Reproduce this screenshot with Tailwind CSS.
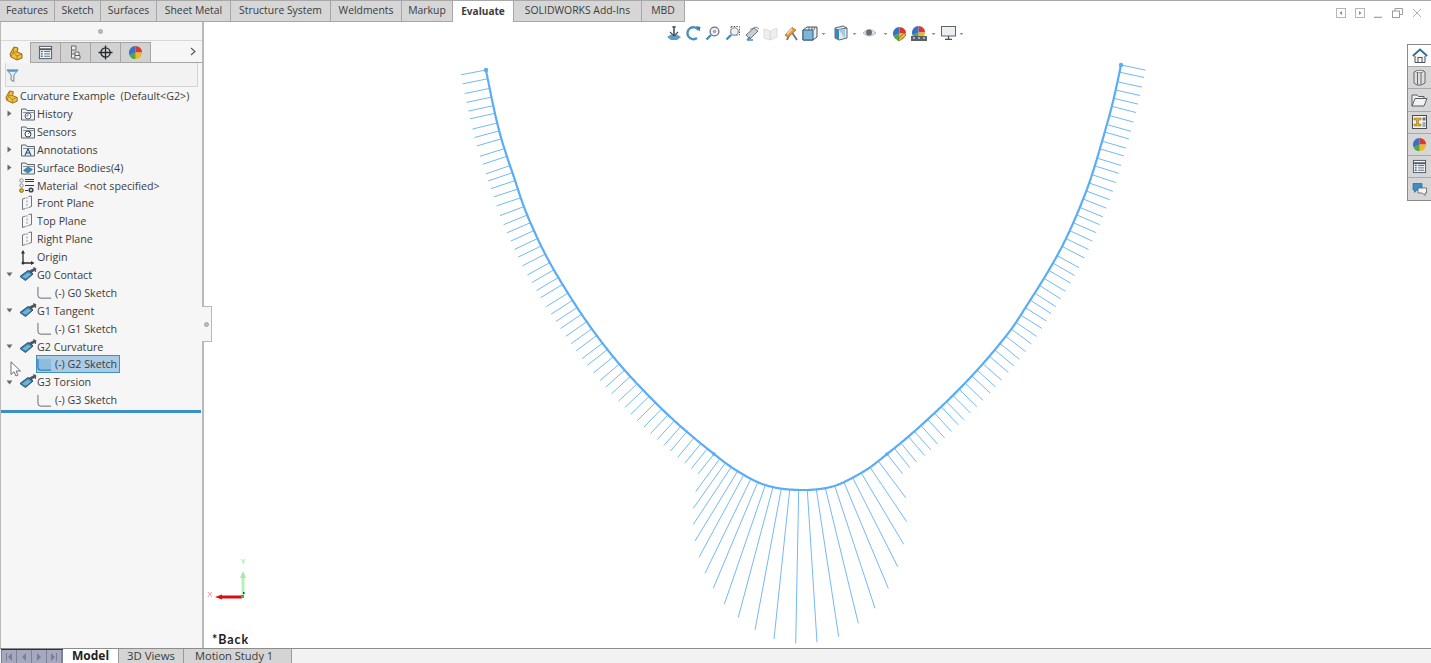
<!DOCTYPE html>
<html lang="en">
<head>
<meta charset="utf-8">
<title>Curvature Example</title>
<script src="https://cdn.jsdelivr.net/npm/@tailwindcss/browser@4"></script>
</head>
<body class="bg-white">
<svg class="absolute w-0 h-0" aria-hidden="true">
  <defs>
    <symbol id="part" viewBox="0 0 16 16">
      <path d="M2 9 L6 2 L10 3 L9 7 L14 9 L14 13 L9 15 L3 12 Z" fill="#f4bd3c" stroke="#8d6a12" stroke-width="1"/>
      <path d="M6 2 L5 7 L9 7 M5 7 L3 12 M9 15 L9 11 L14 9 M9 11 L5 8" fill="none" stroke="#a07c1c" stroke-width=".8"/>
    </symbol>
    <symbol id="folder" viewBox="0 0 16 16">
      <path d="M1.5 14 V3 H6 L7 4.5 H14.5 V14 Z" fill="#eef1f4" stroke="#5c6670"/>
      <path d="M3 6.5 H14.5" stroke="#8a949e"/>
    </symbol>
    <symbol id="plane" viewBox="0 0 16 16">
      <path d="M3.5 4 L6.5 3 M9.5 1.5 L12.5 1 V11.5 L9.5 12.5 M6.5 13.5 L3.5 14.5 V4" fill="none" stroke="#6e7780" stroke-width="1"/>
      <path d="M8 2 V14" stroke="#8e979f" stroke-dasharray="2 1.4"/>
    </symbol>
    <symbol id="surf" viewBox="0 0 18 16">
      <path d="M1 9.5 L9 3.5 L14 7 L6.5 13.5 Z" fill="#3f83ad" stroke="#20506f"/>
      <path d="M3 10 L9 5.5 L12 7.5 L7 11.5 Z" fill="#73b3d8"/>
      <path d="M10 4 L15 1.5 L14.5 0.5 L17 1.5 L16.5 5 L15.5 3.5 L12 6" fill="#4b5660" stroke="#2c343b" stroke-width=".5"/>
    </symbol>
    <symbol id="sketch" viewBox="0 0 16 16">
      <path d="M1 2 V11 Q1 14 4 14 H15" fill="none" stroke="#5b646c" stroke-width="1"/>
    </symbol>
    <symbol id="ball" viewBox="0 0 16 16">
      <path d="M8 8 L8 1 A7 7 0 0 1 15 8 Z" fill="#d83a30"/>
      <path d="M8 8 L15 8 A7 7 0 0 1 8 15 Z" fill="#eab92a"/>
      <path d="M8 8 L8 15 A7 7 0 0 1 1.6 10.8 Z" fill="#54a53f"/>
      <path d="M8 8 L1.6 10.8 A7 7 0 0 1 8 1 Z" fill="#3a71c4"/>
    </symbol>
    <symbol id="list" viewBox="0 0 16 16">
      <rect x="1.5" y="1.5" width="13" height="13" fill="#f4f7fa" stroke="#4e5963"/>
      <path d="M1.5 4.5 H14.5" stroke="#4e5963" stroke-width="2"/>
      <path d="M3 7 H5 M3 9.5 H5 M3 12 H5" stroke="#2868a8" stroke-width="1.4"/>
      <path d="M6.5 7 H13 M6.5 9.5 H13 M6.5 12 H13" stroke="#59636c" stroke-width="1"/>
    </symbol>
    <symbol id="dd" viewBox="0 0 5 5"><path d="M0.5 2 H4.5 L2.5 4 Z" fill="#8b8b8b"/></symbol>
  </defs>
</svg>

<div class="flex flex-col w-[1431px] h-[663px] overflow-hidden font-['Open_Sans',sans-serif] text-[10.7px] text-[#3c3c3c]">

  <!-- top tab bar -->
  <header class="flex items-stretch h-[22px] shrink-0 border-t border-[#a8a8a8] text-[10.4px]">
    <nav class="flex items-stretch">
      <a class="w-[55px] bg-[#d6d6d6] border-r border-b border-[#a6a6a6] flex items-center justify-center">Features</a>
      <a class="w-[46px] bg-[#d6d6d6] border-r border-b border-[#a6a6a6] flex items-center justify-center">Sketch</a>
      <a class="w-[56px] bg-[#d6d6d6] border-r border-b border-[#a6a6a6] flex items-center justify-center">Surfaces</a>
      <a class="w-[74px] bg-[#d6d6d6] border-r border-b border-[#a6a6a6] flex items-center justify-center">Sheet Metal</a>
      <a class="w-[100px] bg-[#d6d6d6] border-r border-b border-[#a6a6a6] flex items-center justify-center">Structure System</a>
      <a class="w-[71px] bg-[#d6d6d6] border-r border-b border-[#a6a6a6] flex items-center justify-center">Weldments</a>
      <a class="w-[51px] bg-[#d6d6d6] border-r border-[#a6a6a6] border-b flex items-center justify-center">Markup</a>
      <a class="w-[61px] bg-white border-r border-[#a6a6a6] flex items-center justify-center font-bold text-[10.1px]">Evaluate</a>
      <a class="w-[128px] bg-[#d6d6d6] border-r border-b border-[#a6a6a6] flex items-center justify-center">SOLIDWORKS Add-Ins</a>
      <a class="w-[43px] bg-[#d6d6d6] border-r border-b border-[#a6a6a6] flex items-center justify-center">MBD</a>
    </nav>
    <div class="flex-1 relative">
      <div class="absolute right-[9px] top-[7px] flex items-center gap-[9px]">
        <svg class="w-[10px] h-[10px]" viewBox="0 0 10 10"><rect x=".5" y=".5" width="9" height="9" fill="none" stroke="#b5b5b5"/><path d="M6 3 L3.5 5 L6 7 Z" fill="#8a8a8a"/></svg>
        <svg class="w-[10px] h-[10px]" viewBox="0 0 10 10"><rect x=".5" y=".5" width="9" height="9" fill="none" stroke="#b5b5b5"/><path d="M4 3 L6.5 5 L4 7 Z" fill="#8a8a8a"/></svg>
        <svg class="w-[9px] h-[10px]" viewBox="0 0 9 10"><path d="M0 9.5 H8" stroke="#a8a8a8" stroke-width="1.6"/></svg>
        <svg class="w-[11px] h-[10px]" viewBox="0 0 11 10"><rect x=".5" y="3" width="7" height="6.5" fill="none" stroke="#9d9d9d"/><path d="M3 3 V.5 H10.5 V6.5 H7.5" fill="none" stroke="#9d9d9d"/></svg>
        <svg class="w-[10px] h-[10px]" viewBox="0 0 10 10"><path d="M1 1 L9 9 M9 1 L1 9" stroke="#b0b0b0"/></svg>
      </div>
    </div>
  </header>

  <!-- main -->
  <main class="flex flex-1 min-h-0">
    <!-- feature manager -->
    <aside class="relative w-[204px] shrink-0 bg-[#f6f6f6] border-l border-r-2 border-[#b9b9b9] flex flex-col">
      <div class="h-[19px] border-b border-[#d8d8d8] flex items-center justify-center shrink-0 pr-[2px]">
        <span class="w-[5px] h-[5px] rounded-full bg-[#bdbdbd] border border-[#a5a5a5]"></span>
      </div>
      <div class="h-[22px] flex items-end shrink-0 relative pb-0 border-b border-[#a5a5a5]">
        <span class="w-[30px] h-[21px] bg-[#f6f6f6] border-r border-[#a5a5a5] -mb-px flex items-center justify-center"><svg class="w-[16px] h-[16px]"><use href="#part"/></svg></span>
        <span class="w-[30px] h-[20px] bg-[#d2d2d2] border-r border-t border-[#a5a5a5] flex items-center justify-center"><svg class="w-[15px] h-[15px]"><use href="#list"/></svg></span>
        <span class="w-[30px] h-[20px] bg-[#d2d2d2] border-r border-t border-[#a5a5a5] flex items-center justify-center">
          <svg class="w-[15px] h-[15px]" viewBox="0 0 15 15"><path d="M3.5 1 H8 V5 H3.5 Z M3.5 5 V13 H7 M3.5 9 H7 M7 7 H11 V10.5 H7 Z M7 10.5 H12 V14 H7 Z" fill="#ededed" stroke="#5a6067" stroke-width=".9"/></svg>
        </span>
        <span class="w-[30px] h-[20px] bg-[#d2d2d2] border-r border-t border-[#a5a5a5] flex items-center justify-center">
          <svg class="w-[15px] h-[15px]" viewBox="0 0 15 15"><circle cx="7.5" cy="7.5" r="4.6" fill="none" stroke="#262b30" stroke-width="1.3"/><path d="M7.5 .5 V14.5 M.5 7.5 H14.5" stroke="#262b30" stroke-width="1.3"/></svg>
        </span>
        <span class="w-[30px] h-[20px] bg-[#d2d2d2] border-r border-t border-[#a5a5a5] flex items-center justify-center"><svg class="w-[15px] h-[15px]"><use href="#ball"/></svg></span>
        <svg class="absolute left-[189px] top-[6px] w-[6px] h-[9px]" viewBox="0 0 6 9"><path d="M1 1 L5 4.5 L1 8" fill="none" stroke="#555" stroke-width="1.1"/></svg>
      </div>
      <div class="mx-[4px] h-[24.15px] bg-[#f2f2f2] border-x border-b border-[#d4d4d4] shrink-0 pt-[5px]">
        <svg class="w-[13px] h-[15px]" viewBox="0 0 14 15"><path d="M1 1.5 H13 L8.5 7 V14 L5.5 12.5 V7 Z" fill="#e8eff4" stroke="#5d7f97"/><path d="M1 1.5 H13 L11.5 3.5 H2.5 Z" fill="#4f9ac9"/></svg>
      </div>

      <!-- tree -->
      <ul class="flex flex-col shrink-0 [&>li]:h-[17.9px] [&>li]:flex [&>li]:items-center">
        <li class="pl-[3px]"><svg class="w-[15px] h-[15px] mr-px"><use href="#part"/></svg>Curvature Example&nbsp; (Default&lt;G2&gt;)</li>
        <li><span class="w-[16px] flex justify-center"><svg class="w-[5px] h-[7px]" viewBox="0 0 5 7"><path d="M0.5 0.5 L4.5 3.5 L0.5 6.5 Z" fill="#6a6a6a"/></svg></span><span class="relative w-[20px] h-[16px]"><svg class="w-[16px] h-[16px] ml-[3px]"><use href="#folder"/></svg><svg class="absolute left-[7px] top-[6px] w-[8px] h-[8px]" viewBox="0 0 8 8"><circle cx="4" cy="4" r="3" fill="#fff" stroke="#45647c"/><path d="M4 2 V4 H2" stroke="#c44" fill="none" stroke-width=".8"/></svg></span>History</li>
        <li class="pl-[16px]"><span class="relative w-[20px] h-[16px]"><svg class="w-[16px] h-[16px] ml-[3px]"><use href="#folder"/></svg><svg class="absolute left-[7px] top-[6px] w-[8px] h-[8px]" viewBox="0 0 8 8"><circle cx="4" cy="4" r="3" fill="#fff" stroke="#3a3f44"/><path d="M4 4 L6 2" stroke="#d33"/></svg></span>Sensors</li>
        <li><span class="w-[16px] flex justify-center"><svg class="w-[5px] h-[7px]" viewBox="0 0 5 7"><path d="M0.5 0.5 L4.5 3.5 L0.5 6.5 Z" fill="#6a6a6a"/></svg></span><span class="relative w-[20px] h-[16px]"><svg class="w-[16px] h-[16px] ml-[3px]"><use href="#folder"/></svg><svg class="absolute left-[7px] top-[6px] w-[8px] h-[8px]" viewBox="0 0 8 8"><path d="M1 7.5 L4 .8 L7 7.5 M2.3 5 H5.7" fill="none" stroke="#26507c" stroke-width="1.1"/></svg></span>Annotations</li>
        <li><span class="w-[16px] flex justify-center"><svg class="w-[5px] h-[7px]" viewBox="0 0 5 7"><path d="M0.5 0.5 L4.5 3.5 L0.5 6.5 Z" fill="#6a6a6a"/></svg></span><span class="relative w-[20px] h-[16px]"><svg class="w-[16px] h-[16px] ml-[3px]"><use href="#folder"/></svg><svg class="absolute left-[6px] top-[6px] w-[10px] h-[8px]" viewBox="0 0 10 8"><path d="M.5 4.5 L5 1 L9.5 3.5 L5 7 Z" fill="#4089b3" stroke="#28597a" stroke-width=".6"/></svg></span>Surface Bodies(4)</li>
        <li class="pl-[16px]"><svg class="w-[16px] h-[16px] ml-[2px] mr-[2px]" viewBox="0 0 16 16"><circle cx="2.5" cy="2.5" r="1.7" fill="#fff" stroke="#80888f"/><path d="M6 1.5 H15 M6 3.5 H15 M6 7.5 H15" stroke="#333b43" stroke-width="1.1"/><circle cx="2.5" cy="7.5" r="1.7" fill="#fff" stroke="#80888f"/><circle cx="2.5" cy="12.5" r="1.9" fill="#e7b62d" stroke="#8a6b12"/><path d="M6 12.5 H9" stroke="#333b43"/><circle cx="12" cy="12" r="2.6" fill="#3d454c"/><circle cx="12" cy="12" r=".9" fill="#fff"/></svg>Material&nbsp; &lt;not specified&gt;</li>
        <li class="pl-[16px]"><svg class="w-[16px] h-[16px] ml-[2px] mr-[2px]"><use href="#plane"/></svg>Front Plane</li>
        <li class="pl-[16px]"><svg class="w-[16px] h-[16px] ml-[2px] mr-[2px]"><use href="#plane"/></svg>Top Plane</li>
        <li class="pl-[16px]"><svg class="w-[16px] h-[16px] ml-[2px] mr-[2px]"><use href="#plane"/></svg>Right Plane</li>
        <li class="pl-[16px]"><svg class="w-[16px] h-[16px] ml-[2px] mr-[2px]" viewBox="0 0 16 16"><path d="M4 14 V3 M4 14 H14" stroke="#2b3035" stroke-width="1.3" fill="none"/><path d="M4 1 L6 4.5 H2 Z M15.5 14 L12 12 V16 Z" fill="#2b3035"/><circle cx="4" cy="14" r="1.5" fill="#2b3035"/></svg>Origin</li>
        <li><span class="w-[16px] flex justify-center"><svg class="w-[7px] h-[5px]" viewBox="0 0 7 5"><path d="M0.5 0.5 H6.5 L3.5 4.5 Z" fill="#6a6a6a"/></svg></span><svg class="w-[18px] h-[16px] ml-[2px]"><use href="#surf"/></svg>G0 Contact</li>
        <li class="pl-[36px]"><svg class="w-[15px] h-[15px] mr-[3px]"><use href="#sketch"/></svg>(-) G0 Sketch</li>
        <li><span class="w-[16px] flex justify-center"><svg class="w-[7px] h-[5px]" viewBox="0 0 7 5"><path d="M0.5 0.5 H6.5 L3.5 4.5 Z" fill="#6a6a6a"/></svg></span><svg class="w-[18px] h-[16px] ml-[2px]"><use href="#surf"/></svg>G1 Tangent</li>
        <li class="pl-[36px]"><svg class="w-[15px] h-[15px] mr-[3px]"><use href="#sketch"/></svg>(-) G1 Sketch</li>
        <li><span class="w-[16px] flex justify-center"><svg class="w-[7px] h-[5px]" viewBox="0 0 7 5"><path d="M0.5 0.5 H6.5 L3.5 4.5 Z" fill="#6a6a6a"/></svg></span><svg class="w-[18px] h-[16px] ml-[2px]"><use href="#surf"/></svg>G2 Curvature</li>
        <li class="pl-[35px]"><span class="flex items-center h-[18px] pr-[2px] bg-[#aacbe6] border border-[#3f8fc5]"><svg class="w-[15px] h-[15px] mr-[3px]" viewBox="0 0 16 16"><rect x="2" y="2" width="13" height="11" fill="#8fbbdc"/><path d="M1 2 V11 Q1 14 4 14 H15" fill="none" stroke="#2f7fb5" stroke-width="1.4"/></svg>(-) G2 Sketch</span></li>
        <li><span class="w-[16px] flex justify-center"><svg class="w-[7px] h-[5px]" viewBox="0 0 7 5"><path d="M0.5 0.5 H6.5 L3.5 4.5 Z" fill="#6a6a6a"/></svg></span><svg class="w-[18px] h-[16px] ml-[2px]"><use href="#surf"/></svg>G3 Torsion</li>
        <li class="pl-[36px]"><svg class="w-[15px] h-[15px] mr-[3px]"><use href="#sketch"/></svg>(-) G3 Sketch</li>
      </ul>
      <div class="h-[3px] mt-[0.8px] bg-[#3a8fc9] mr-[1px] shrink-0"></div>

      <!-- mouse pointer -->
      <svg class="absolute left-[9px] top-[339px] w-[12px] h-[16px]" viewBox="0 0 12 16"><path d="M1 .8 V13.5 L4 10.8 L6 15 L8 14 L6 10 H10.5 Z" fill="#fff" stroke="#6b7178" stroke-width="1"/></svg>
      <!-- flyout handle -->
      <div class="absolute left-[201px] top-[284px] w-[10px] h-[36px] bg-[#f6f6f6] border border-l-0 border-[#b9b9b9] flex items-center justify-center z-10">
        <span class="w-[5px] h-[5px] rounded-full bg-[#bdbdbd] border border-[#a5a5a5]"></span>
      </div>
    </aside>

    <!-- graphics area -->
    <section class="relative flex-1 min-w-0 bg-white">
      <svg id="view" class="absolute inset-0 w-full h-full" viewBox="204 22 1227 626">
        <path id="teeth" fill="none" stroke="#74b8f8" stroke-width="1"/>
        <path id="curve" fill="none" stroke="#58acf8" stroke-width="2.2"/>
        <circle cx="486" cy="70" r="2.2" fill="#58acf8"/>
        <circle cx="1121" cy="65" r="2.2" fill="#58acf8"/>
        <circle cx="714" cy="454" r="1.8" fill="#58acf8"/>
        <circle cx="887" cy="454" r="1.8" fill="#58acf8"/>
        <path d="M243 596 V578" stroke="#b7f0b5" stroke-width="3"/>
        <path d="M243 571 L246 578 H240 Z" fill="#a4e8a2"/>
        <path d="M220 597 H242" stroke="#d90f0f" stroke-width="3"/>
        <path d="M215 597 L222 594.5 V599.5 Z" fill="#d90f0f"/>
        <rect x="241" y="595" width="3" height="3" fill="#35b935"/>
        <rect x="243" y="592" width="1.5" height="2" fill="#2233cc"/>
        <text x="243" y="564" text-anchor="middle" font-size="7" fill="#7fe07f" font-family="Liberation Sans">Y</text>
        <text x="210" y="597" text-anchor="middle" font-size="8" fill="#f08080" font-family="Liberation Sans">X</text>
      </svg>

      <!-- heads-up toolbar -->
      <div class="absolute left-[462px] top-[3px] flex items-center h-[16px]">
        <svg class="w-[16px] h-[16px] mr-[3px]" viewBox="0 0 16 16"><path d="M1 12 L5 9.5 H11 L15 12 L11 15 H5 Z" fill="#5c9ec9"/><path d="M8 1 V10" stroke="#46525c" stroke-width="1.6"/><path d="M4 7 L8 11 L12 7 M6 2 H10" fill="none" stroke="#46525c" stroke-width="1.2"/></svg>
        <svg class="w-[16px] h-[16px] mr-[4px]" viewBox="0 0 16 16"><path d="M13.5 5 A6 6 0 1 0 12 13" fill="none" stroke="#4d8fbd" stroke-width="2.4"/><path d="M11 1 L15.5 2 L14.5 6.5 Z" fill="#3c7ba8"/></svg>
        <svg class="w-[15px] h-[15px] mr-[5px]" viewBox="0 0 15 15"><circle cx="9.5" cy="5.5" r="4.4" fill="#f0f3f6" stroke="#6b757e" stroke-width="1.3"/><path d="M6 9 L1.5 13.5" stroke="#4a8dbb" stroke-width="2.4"/><circle cx="9.5" cy="5.5" r="1.8" fill="#a5adb4"/></svg>
        <svg class="w-[15px] h-[15px] mr-[4px]" viewBox="0 0 15 15"><rect x="6" y=".5" width="8.5" height="8.5" fill="none" stroke="#5b6169" stroke-dasharray="1.5 1.2"/><circle cx="9.5" cy="5.5" r="3.8" fill="#eef2f5" stroke="#7f8890" stroke-width="1.1"/><path d="M6 9 L1.5 13.5" stroke="#4a8dbb" stroke-width="2.4"/></svg>
        <svg class="w-[16px] h-[15px] mr-[3px]" viewBox="0 0 16 15"><path d="M2 9 L10 2 L14 5 L6 13 Z" fill="#c9ced2" stroke="#6c747b"/><path d="M6 3.5 L12 1 L15 3" fill="none" stroke="#808890"/><path d="M3 14 L9 14 M3 14 L6 11" stroke="#4a8dbb" stroke-width="1.5" fill="none"/></svg>
        <svg class="w-[15px] h-[15px] mr-[5px]" viewBox="0 0 15 15"><path d="M1 3 L7 5 V14 L1 12 Z M7.5 5 L14 2 V11 L7.5 14 Z" fill="#eeeeee" stroke="#dcdcdc"/></svg>
        <svg class="w-[15px] h-[15px] mr-[4px]" viewBox="0 0 15 15"><path d="M4 14 L8 5 L14 14" fill="none" stroke="#6c747b" stroke-width="1.8"/><path d="M2 9 L9 1.5 L13 4 L5 11.5 Z" fill="#e49a3d" stroke="#9f611a" stroke-width=".7"/><path d="M4 8 L9 3" stroke="#f7e4b6" stroke-width="1.2"/></svg>
        <svg class="w-[16px] h-[16px] mr-[1px]" viewBox="0 0 16 16"><path d="M1 5 L5 2 H15 V12 L11 15 H1 Z" fill="#e8eef3" stroke="#48535c"/><path d="M1 5 H11 V15 H1 Z" fill="#7fb5d8" stroke="#365c78"/><path d="M7 2 V5 M10 2 V5 M13 2 L12 5" stroke="#48535c" stroke-width=".8"/></svg>
        <svg class="w-[5px] h-[5px] mr-[8px] ml-[2px]"><use href="#dd"/></svg>
        <svg class="w-[15px] h-[16px] mr-[1px]" viewBox="0 0 15 16"><path d="M1 3 L9 1 L13 3 V13 L5 15 L1 13 Z" fill="#e4eaef" stroke="#5c6770"/><path d="M1 3 L5 4.5 V15 L1 13 Z" fill="#3e86b6"/><path d="M5 4.5 L13 3" stroke="#5c6770"/><path d="M5 4.5 H11 V14" fill="#9ccbe8"/></svg>
        <svg class="w-[5px] h-[5px] mr-[5px] ml-[2px]"><use href="#dd"/></svg>
        <svg class="w-[15px] h-[12px] mr-[4px]" viewBox="0 0 15 12"><path d="M1 6 Q7.5 -1 14 6 Q7.5 12 1 6 Z" fill="#dfe1e3" stroke="#b3b7bb"/><circle cx="7" cy="5.5" r="3" fill="#666d74"/></svg>
        <svg class="w-[5px] h-[5px] mr-[4px] ml-[2px]"><use href="#dd"/></svg>
        <span class="relative w-[15px] h-[15px] mr-[4px]"><svg class="w-[15px] h-[15px]"><use href="#ball"/></svg><svg class="absolute left-[5px] top-[6px] w-[10px] h-[10px]" viewBox="0 0 10 10"><path d="M1 9 L2 6.5 L7 1 L9 3 L3.5 8 Z" fill="#efc552" stroke="#70541a" stroke-width=".7"/></svg></span>
        <span class="relative w-[16px] h-[16px] mr-[2px]"><svg class="w-[15px] h-[15px]"><use href="#ball"/></svg><svg class="absolute left-0 top-[10px] w-[16px] h-[6px]" viewBox="0 0 16 6"><rect x="0" y="1" width="16" height="5" fill="#59626a"/><path d="M2 3 H4 M7 3 H9 M12 3 H14" stroke="#fff"/></svg></span>
        <svg class="w-[5px] h-[5px] mr-[5px] ml-[2px]"><use href="#dd"/></svg>
        <svg class="w-[15px] h-[14px] mr-[1px]" viewBox="0 0 15 14"><rect x=".5" y=".5" width="14" height="9.5" fill="#eceeef" stroke="#5e666d"/><path d="M7.5 10 V13 M4 13.5 H11" stroke="#474e55" stroke-width="1.3"/></svg>
        <svg class="w-[5px] h-[5px] ml-[2px]"><use href="#dd"/></svg>
      </div>

      <!-- task pane tabs -->
      <div class="absolute right-0 top-[22px] w-[24px] flex flex-col border-l border-[#8a8a8a] border-t border-b">
        <span class="h-[22.2px] bg-white border-b border-[#a8a8a8] flex items-center justify-center">
          <svg class="w-[16px] h-[16px]" viewBox="0 0 16 16"><path d="M.8 8 L8 1.5 L15.2 8" fill="none" stroke="#2c6d96" stroke-width="1.8"/><path d="M3 8 V14.5 H13 V8" fill="#f2f2f2" stroke="#4c555d"/><rect x="6" y="9.5" width="4" height="5" fill="#fff" stroke="#4c555d"/></svg>
        </span>
        <span class="h-[22.2px] bg-[#d6d6d6] border-b border-[#a8a8a8] flex items-center justify-center">
          <svg class="w-[13px] h-[17px]" viewBox="0 0 13 17"><path d="M1 3 L4 1.5 H10 L12 3 V14 L8 16 H4 L1 14 Z" fill="#dfdfdf" stroke="#62686e"/><path d="M4.5 2 V15.5 M8 2 V15.5" stroke="#62686e"/><ellipse cx="6.5" cy="2.5" rx="4" ry="1.2" fill="#efefef" stroke="#62686e" stroke-width=".7"/></svg>
        </span>
        <span class="h-[22.2px] bg-[#d6d6d6] border-b border-[#a8a8a8] flex items-center justify-center">
          <svg class="w-[17px] h-[14px]" viewBox="0 0 17 14"><path d="M1 13 V2 H6 L7.5 3.5 H13 V5.5 M1 13 L4 5.5 H16 L13 13 Z" fill="#f2f2f2" stroke="#565d64" stroke-width="1"/></svg>
        </span>
        <span class="h-[22.2px] bg-[#d6d6d6] border-b border-[#a8a8a8] flex items-center justify-center">
          <svg class="w-[15px] h-[14px]" viewBox="0 0 15 14"><rect x=".5" y=".5" width="14" height="13" fill="#f4f4f4" stroke="#484e54"/><path d="M2 3 H9 V5 H6.5 V9 H9 V11 H2 V9 H4.5 V5 H2 Z" fill="#e6b32c" stroke="#7b5f12" stroke-width=".5"/><rect x="10.5" y="2.5" width="3" height="3" fill="#6b7278"/><rect x="10.5" y="7" width="3" height="5" fill="#a3a9ae"/></svg>
        </span>
        <span class="h-[22.2px] bg-[#d6d6d6] border-b border-[#a8a8a8] flex items-center justify-center"><svg class="w-[15px] h-[15px]"><use href="#ball"/></svg></span>
        <span class="h-[22.2px] bg-[#d6d6d6] border-b border-[#a8a8a8] flex items-center justify-center"><svg class="w-[15px] h-[15px]"><use href="#list"/></svg></span>
        <span class="h-[22.2px] bg-[#d6d6d6] flex items-center justify-center">
          <svg class="w-[15px] h-[13px]" viewBox="0 0 15 13"><path d="M1 .5 H10 V7 H5 L2.5 9.5 V7 H1 Z" fill="#3e8cc6" stroke="#2a6a98" stroke-width=".7"/><path d="M6 5 H14.5 V10 H13 V12.5 L10.5 10 H6 Z" fill="#f4f4f4" stroke="#596067" stroke-width=".8"/></svg>
        </span>
      </div>

      <p class="absolute left-[8px] bottom-0 font-['Lato',sans-serif] font-bold text-[12.5px] leading-[16px] text-[#222] tracking-[0.9px]">*Back</p>
    </section>
  </main>

  <!-- bottom tabs -->
  <footer class="flex items-stretch h-[15px] shrink-0 border-t border-[#8c8c8c] bg-[#f2f2f2] relative text-[11.4px]">
    <div class="w-[62px] ml-px flex items-center gap-[1px] bg-[#7d8197] border-t border-[#30323c] pl-[1px]">
      <span class="w-[14px] h-full bg-[#a5a9c0] flex items-center justify-center"><svg class="w-[8px] h-[8px]" viewBox="0 0 8 8"><path d="M7 0 V8 L3 4 Z M1 0 H2 V8 H1 Z" fill="#7a7e96"/></svg></span>
      <span class="w-[14px] h-full bg-[#a5a9c0] flex items-center justify-center"><svg class="w-[8px] h-[8px]" viewBox="0 0 8 8"><path d="M6 0 V8 L2 4 Z" fill="#7a7e96"/></svg></span>
      <span class="w-[14px] h-full bg-[#a5a9c0] flex items-center justify-center"><svg class="w-[8px] h-[8px]" viewBox="0 0 8 8"><path d="M2 0 V8 L6 4 Z" fill="#7a7e96"/></svg></span>
      <span class="w-[14px] h-full bg-[#a5a9c0] flex items-center justify-center"><svg class="w-[8px] h-[8px]" viewBox="0 0 8 8"><path d="M1 0 V8 L5 4 Z M6 0 H7 V8 H6 Z" fill="#7a7e96"/></svg></span>
    </div>
    <a class="w-[55px] bg-white flex items-center justify-center font-bold text-[#222] text-[12px]">Model</a>
    <a class="w-[66px] bg-[#d4d4d4] border-x border-[#9a9a9a] flex items-center justify-center">3D Views</a>
    <a class="w-[108px] bg-[#d4d4d4] border-r border-[#9a9a9a] flex items-center pl-[11px] text-[11.1px]">Motion Study 1</a>
  </footer>
</div>

<script>
const L=[[486,70],[490,90],[500,135],[515,180],[525,210],[542,248],[558,277],[580,312],[600,340],[620,365],[643,390],[668,415],[693,437],[714,454]];
const M=[[731,467],[751,479],[765,485],[781,488.7],[799,490],[816,489.5],[835,486],[853,477.5],[870,467.5],[887,454]];
const R=[[908,437],[940,408],[970,378],[993,352],[1013,327],[1027,305],[1043,280],[1063,245],[1080,207],[1092,175],[1103,138],[1113,102],[1121,65]];
function smooth(p){
  const o=[];
  for(let i=0;i<p.length-1;i++){
    const a=p[Math.max(i-1,0)],b=p[i],c=p[i+1],d=p[Math.min(i+2,p.length-1)];
    for(let k=0;k<24;k++){
      const t=k/24,t2=t*t,t3=t2*t;
      const f=(j)=>.5*(2*b[j]+(c[j]-a[j])*t+(2*a[j]-5*b[j]+4*c[j]-d[j])*t2+(3*b[j]-a[j]-3*c[j]+d[j])*t3);
      o.push([f(0),f(1)]);
    }
  }
  o.push(p[p.length-1]);
  return o.map((q,i)=>{
    const w=Math.min(i,o.length-1-i,10);let x=0,y=0;
    for(let j=i-w;j<=i+w;j++){x+=o[j][0];y+=o[j][1];}
    return [x/(2*w+1),y/(2*w+1)];
  });
}
function comb(p,step,len){
  const s=smooth(p);let acc=[0];
  for(let i=1;i<s.length;i++)acc.push(acc[i-1]+Math.hypot(s[i][0]-s[i-1][0],s[i][1]-s[i-1][1]));
  const tot=acc[acc.length-1],n=Math.round(tot/step),st=tot/n;let d="";
  for(let k=0;k<=n;k++){
    const t=k*st;let i=acc.findIndex(v=>v>=t-1e-6);if(i<0)i=s.length-1;
    const a=s[Math.max(i-4,0)],b=s[Math.min(i+4,s.length-1)];
    const tx=b[0]-a[0],ty=b[1]-a[1],m=Math.hypot(tx,ty);
    const nx=-ty/m,ny=tx/m;
    d+="M"+s[i][0].toFixed(1)+" "+s[i][1].toFixed(1)+"L"+(s[i][0]+nx*len).toFixed(1)+" "+(s[i][1]+ny*len).toFixed(1);
  }
  return d;
}
const all=smooth(L.concat(M,R));
document.getElementById("curve").setAttribute("d","M"+all.map(q=>q[0].toFixed(1)+" "+q[1].toFixed(1)).join("L"));
/* middle comb: root and tip read from the reference, relative to (680,430) at 3x */
const mid=[[118,88,47,185],[135,100,40,235],[153,112,40,283],[172,125,45,333],[190,137,57,382],[212,148,75,430],[233,157,100,475],[256,165,133,523],[279,171,175,562],[304,176,225,600],[329,179,282,627],[356,180,347,640],[382,180,411,637],[409,178,476,620],[436,174,535,580],[464,167,585,535],[492,157,625,475],[519,145,653,410],[545,131,671,343],[571,113,680,275],[597,96,677,203]];
let d=comb(L,8.75,25.5)+comb([[887,454]].concat(R),8.8,25);
for(const q of mid){d+="M"+(680+q[0]/3).toFixed(1)+" "+(430+q[1]/3).toFixed(1)+"L"+(680+q[2]/3).toFixed(1)+" "+(430+q[3]/3).toFixed(1);}
document.getElementById("teeth").setAttribute("d",d);
</script>
</body>
</html>
